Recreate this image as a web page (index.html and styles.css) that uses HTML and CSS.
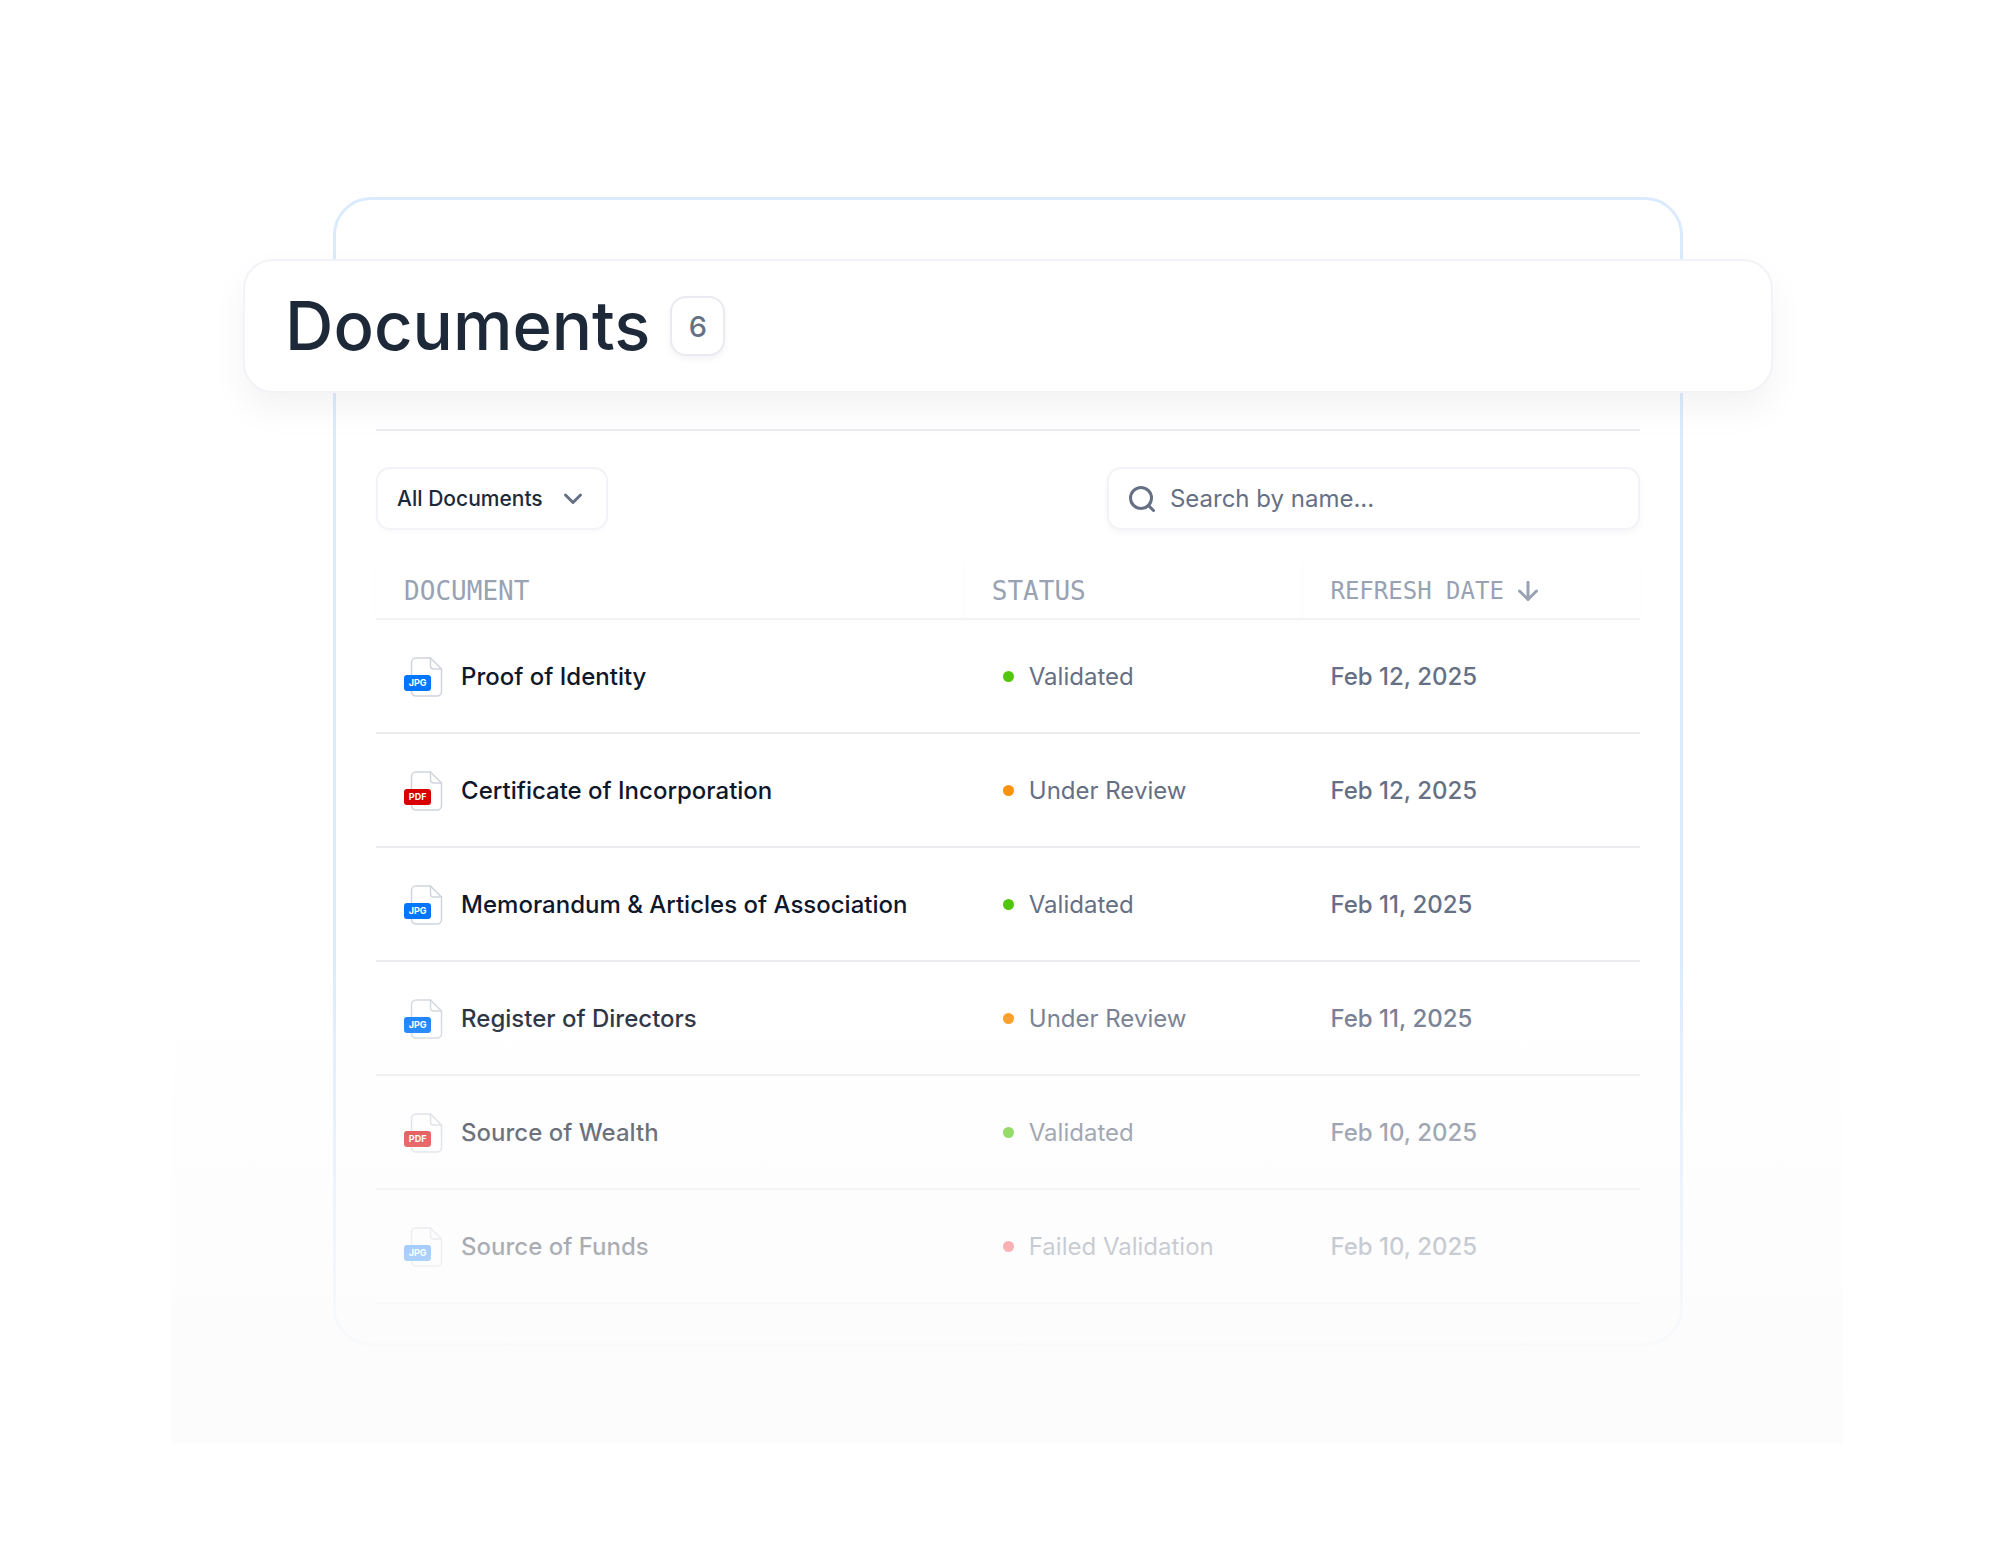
FILE: index.html
```html
<!doctype html>
<html lang="en">
<head>
  <title>Documents</title>
  <meta charset="utf-8" />
  <meta name="viewport" content="width=device-width,initial-scale=1" />

  <link rel="stylesheet" href="styles.css">
</head>
<body>
  <!-- shared icon shapes -->
  <svg class="sprite" width="0" height="0" aria-hidden="true">
    <symbol id="page" viewBox="0 0 40 40">
      <path d="M12 1h14.5l11 11v22.500a4.500 4.500 0 0 1-4.500 4.500H12a4.500 4.500 0 0 1-4.500-4.500v-29A4.500 4.500 0 0 1 12 1Z" />
      <path d="M26.500 1v8a3 3 0 0 0 3 3h8" />
    </symbol>
  </svg>

  <main class="stage">
    <section class="card">
      <header class="title-bar">
        <h1>Documents</h1>
        <span class="count">6</span>
      </header>

      <div class="toolbar">
        <div class="filter">
          <select aria-label="Filter documents">
            <option>All Documents</option>
          </select>
          <svg class="chevron" viewBox="0 0 24 24" aria-hidden="true">
            <path d="m4.500 8 7.500 7.500L19.500 8" />
          </svg>
        </div>

        <label class="search">
          <svg viewBox="0 0 26 26" aria-hidden="true">
            <circle cx="12" cy="12" r="10.500" />
            <path d="m19.500 19.500 5 5" />
          </svg>
          <input type="search" placeholder="Search by name..." aria-label="Search by name" />
        </label>
      </div>

      <table>
        <thead>
          <tr>
            <th class="col-name">DOCUMENT</th>
            <th class="col-status">STATUS</th>
            <th class="col-date">
              <button type="button">
                REFRESH DATE
                <svg viewBox="0 0 20 20" aria-hidden="true">
                  <path d="M10 1v17.500M1.500 10l8.500 8.500 8.500-8.500" />
                </svg>
              </button>
            </th>
          </tr>
        </thead>
        <tbody>
          <tr>
            <td><div class="name"><span class="file"><svg><use href="#page" /></svg><b>JPG</b></span>Proof of Identity</div></td>
            <td><span class="status validated">Validated</span></td>
            <td class="date">Feb 12, 2025</td>
          </tr>
          <tr>
            <td><div class="name"><span class="file pdf"><svg><use href="#page" /></svg><b>PDF</b></span>Certificate of Incorporation</div></td>
            <td><span class="status review">Under Review</span></td>
            <td class="date">Feb 12, 2025</td>
          </tr>
          <tr>
            <td><div class="name"><span class="file"><svg><use href="#page" /></svg><b>JPG</b></span>Memorandum &amp; Articles of Association</div></td>
            <td><span class="status validated">Validated</span></td>
            <td class="date">Feb 11, 2025</td>
          </tr>
          <tr>
            <td><div class="name"><span class="file"><svg><use href="#page" /></svg><b>JPG</b></span>Register of Directors</div></td>
            <td><span class="status review">Under Review</span></td>
            <td class="date">Feb 11, 2025</td>
          </tr>
          <tr>
            <td><div class="name"><span class="file pdf"><svg><use href="#page" /></svg><b>PDF</b></span>Source of Wealth</div></td>
            <td><span class="status validated">Validated</span></td>
            <td class="date">Feb 10, 2025</td>
          </tr>
          <tr>
            <td><div class="name"><span class="file"><svg><use href="#page" /></svg><b>JPG</b></span>Source of Funds</div></td>
            <td><span class="status failed">Failed Validation</span></td>
            <td class="date">Feb 10, 2025</td>
          </tr>
        </tbody>
      </table>
    </section>
  </main>
</body>
</html>
```

FILE: styles.css
```css
* {
  box-sizing: border-box;
}

body {
  margin: 0;
  background: #fff;
  color: #0f172a;
  font-family: Inter, "Liberation Sans", sans-serif;
  font-size: 24px;
}

svg {
  fill: none;
  stroke: currentColor;
  stroke-linecap: round;
  stroke-linejoin: round;
}

.sprite {
  position: absolute;
}

.stage {
  position: relative;
  width: 83%;
  margin: 0 auto;
  padding: 197px 159px 97px 162px;
}

/* fades the lower rows out */
.stage::after {
  content: "";
  position: absolute;
  inset: auto 0 0;
  height: 483px;
  background: linear-gradient(rgba(252, 252, 252, 0), #fcfcfc 91%);
  pointer-events: none;
}

.card {
  padding: 59px 40px 39px;
  border: 3px solid #dbebfe;
  border-radius: 38px;
}

.title-bar {
  display: flex;
  align-items: center;
  gap: 20px;
  height: 134px;
  margin: 0 -133px 36px;
  padding: 0 40px;
  background: #fff;
  border: 2px solid #f2f2f7;
  border-radius: 30px;
  box-shadow: 0 16px 36px rgba(0, 0, 0, 0.05);
}

h1 {
  margin: 0;
  color: #1d2939;
  font-size: 67px;
  font-weight: 500;
  line-height: 80px;
}

.count {
  display: grid;
  place-items: center;
  width: 55px;
  height: 60px;
  color: #667085;
  font-size: 29px;
  font-weight: 500;
  border: 2px solid #eaeaf0;
  border-radius: 16px;
  box-shadow: 0 3px 6px rgba(0, 0, 0, 0.05);
}

.toolbar {
  display: flex;
  justify-content: space-between;
  padding: 36px 0 30px;
  border-top: 2px solid #ebebf0;
}

.filter {
  position: relative;
}

.filter select {
  appearance: none;
  width: 232px;
  height: 63px;
  padding: 0 19px;
  background: #fff;
  color: #1d2939;
  font: 500 21px Inter, sans-serif;
  border: 2px solid #f2f2f7;
  border-radius: 14px;
  box-shadow: 0 2px 4px rgba(0, 0, 0, 0.02);
}

.chevron {
  position: absolute;
  top: 20px;
  right: 23px;
  width: 24px;
  height: 24px;
  color: #667085;
  stroke-width: 3;
  pointer-events: none;
}

.search {
  display: flex;
  align-items: center;
  gap: 15px;
  width: 533px;
  height: 63px;
  padding: 0 20px;
  color: #667085;
  border: 2px solid #f2f2f7;
  border-radius: 14px;
  box-shadow: 0 3px 6px rgba(0, 0, 0, 0.04);
}

.search svg {
  flex: none;
  width: 26px;
  height: 26px;
  stroke-width: 3;
}

.search input {
  flex: 1;
  min-width: 0;
  padding: 0;
  border: 0;
  outline: 0;
  background: none;
  color: inherit;
  font: 400 24px Inter, sans-serif;
}

.search input::placeholder {
  color: #667085;
}

table {
  width: 100%;
  table-layout: fixed;
  border-collapse: separate;
  border-spacing: 0;
}

th {
  height: 60px;
  padding: 3px 28px 0;
  color: #98a2b3;
  font: 400 26px "DejaVu Sans Mono", monospace;
  text-align: left;
  border-bottom: 2px solid #f3f3f6;
  box-shadow: 0 2px 4px rgba(0, 0, 0, 0.02);
}

.col-name {
  width: 46.5%;
}

.col-status {
  width: 26.8%;
}

.col-date button {
  display: flex;
  align-items: center;
  gap: 14px;
  padding: 0;
  background: none;
  border: 0;
  color: inherit;
  font: 400 24px "DejaVu Sans Mono", monospace;
  white-space: nowrap;
}

.col-date svg {
  width: 20px;
  height: 20px;
  stroke-width: 3;
}

td {
  height: 114px;
  padding: 1px 28px 0;
  border-bottom: 2px solid #ebebf0;
}

.name {
  display: flex;
  align-items: center;
  gap: 17px;
  font-weight: 500;
}

/* page outline with the file type tag laid over it */
.file {
  position: relative;
  width: 40px;
  height: 40px;
}

.file svg {
  width: 40px;
  height: 40px;
  color: #d0d5dd;
  stroke-width: 1.5;
}

.file b {
  position: absolute;
  top: 18px;
  left: 0;
  width: 27px;
  background: #0075ff;
  color: #fff;
  font-size: 9px;
  font-weight: 700;
  line-height: 16px;
  text-align: center;
  border-radius: 3px;
}

.file.pdf b {
  background: #d90000;
}

.status {
  display: flex;
  align-items: center;
  gap: 15px;
  padding-left: 11px;
  color: #667085;
}

.status::before {
  content: "";
  width: 11px;
  height: 11px;
  border-radius: 50%;
}

.validated::before {
  background: #52c60a;
}

.review::before {
  background: #fb920b;
}

.failed::before {
  background: #f5222d;
}

.date {
  color: #667085;
  font-weight: 500;
}
```
